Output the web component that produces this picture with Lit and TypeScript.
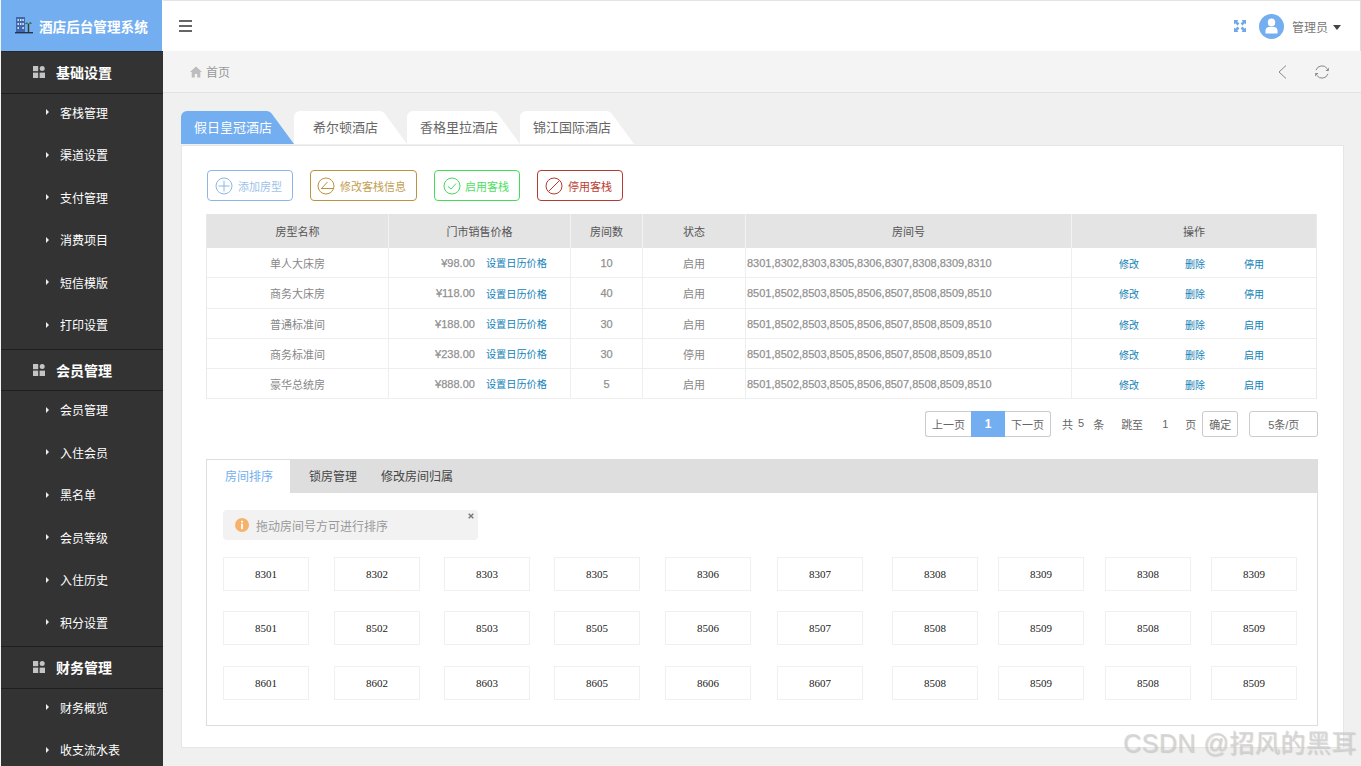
import { LitElement, html, css, svg } from "lit";
import { customElement } from "lit/decorators.js";

const NAV = [
  { title: "基础设置", items: ["客栈管理", "渠道设置", "支付管理", "消费项目", "短信模版", "打印设置"] },
  { title: "会员管理", items: ["会员管理", "入住会员", "黑名单", "会员等级", "入住历史", "积分设置"] },
  { title: "财务管理", items: ["财务概览", "收支流水表"] },
];
const N1 = "8301,8302,8303,8305,8306,8307,8308,8309,8310";
const N2 = "8501,8502,8503,8505,8506,8507,8508,8509,8510";
const ROWS = [
  { name: "单人大床房", price: "¥98.00", count: "10", status: "启用", nums: N1, act: "停用", h: "r30" },
  { name: "商务大床房", price: "¥118.00", count: "40", status: "启用", nums: N2, act: "停用", h: "r31" },
  { name: "普通标准间", price: "¥188.00", count: "30", status: "启用", nums: N2, act: "启用", h: "r30" },
  { name: "商务标准间", price: "¥238.00", count: "30", status: "停用", nums: N2, act: "启用", h: "r30" },
  { name: "豪华总统房", price: "¥888.00", count: "5", status: "启用", nums: N2, act: "启用", h: "r30" },
];
const ROOMS = [
  ["8301", "8302", "8303", "8305", "8306", "8307", "8308", "8309", "8308", "8309"],
  ["8501", "8502", "8503", "8505", "8506", "8507", "8508", "8509", "8508", "8509"],
  ["8601", "8602", "8603", "8605", "8606", "8607", "8508", "8509", "8508", "8509"],
];

const gridIcon = html`<svg class="gico" viewBox="0 0 12 12" width="12" height="12">
  <rect x="0" y="0" width="5.2" height="5.2" fill="#c4c4c4"></rect>
  <circle cx="9.2" cy="2.6" r="2.5" fill="#c4c4c4"></circle>
  <rect x="0" y="6.6" width="5.2" height="5.4" fill="#c4c4c4"></rect>
  <rect x="6.6" y="6.6" width="5.4" height="5.4" fill="#c4c4c4"></rect>
</svg>`;

@customElement("app-root")
export class AppRoot extends LitElement {
  static styles = css`
    :host {
      display: block;
      width: 1361px;
      height: 766px;
      overflow: hidden;
      position: relative;
      background: #f0f0f0;
      font-family: "Liberation Sans", "Noto Sans CJK SC", sans-serif;
      font-size: 12px;
      color: #666;
    }
    * { box-sizing: border-box; }
    .app { display: flex; height: 766px; padding-left: 1px; background: #f4f4f4; }
    .left { width: 162px; flex: none; background: #fff; display: flex; flex-direction: column; }
    .logo {
      width: 161px; height: 51px; flex: none; background: #72aef0;
      display: flex; align-items: center; padding-left: 14px; gap: 6px;
      color: #fff; font-weight: 700; font-size: 13.6px; white-space: nowrap;
    }
    .side { flex: 1; background: #333; overflow: hidden; border-top: 1px solid #25282c; }
    .sec {
      height: 41.5px; display: flex; align-items: center; padding-left: 32px;
      color: #fff; font-weight: 700; font-size: 14px; gap: 11px;
      border-bottom: 1px solid #1f1f1f;
    }
    .sec.next { border-top: 1px solid #1f1f1f; height: 42.5px; }
    .items { height: 255px; }
    .item { height: 42.5px; display: flex; align-items: center; padding: 0 0 5px 45px; color: #fff; font-size: 12px; gap: 11px; }
    .tri { width: 0; height: 0; border-left: 3px solid #eee; border-top: 3px solid transparent; border-bottom: 3px solid transparent; }
    .main { flex: 1; min-width: 0; display: flex; flex-direction: column; background: #f0f0f0; }
    .top {
      height: 51px; flex: none; background: #fff; border-top: 1px solid #e4e4e4; border-right: 1px solid #ddd;
      display: flex; align-items: center; padding: 0 19px 0 16px;
    }
    .burger { display: block; }
    .spacer { flex: 1; }
    .ava { margin-left: 13px; }
    .uname { margin-left: 8px; font-size: 12px; color: #777; }
    .caret { margin-left: 5px; border-top: 5px solid #444; border-left: 4px solid transparent; border-right: 4px solid transparent; margin-top: 2px; }
    .crumb {
      height: 42px; flex: none; background: #f4f4f4; border-bottom: 1px solid #e3e3e3;
      display: flex; align-items: center; padding: 0 31px 0 27px; color: #999;
    }
    .crumb .home { margin-right: 4px; }
    .crumb .back { margin-right: 27px; }
    .body { flex: 1; padding: 18px 17px 0 18px; min-height: 0; }
    .tabs { display: flex; height: 33px; }
    .tab {
      width: 113px; height: 33px; background: #fff; color: #666; font-size: 13px; line-height: 33px; padding-left: 13px;
      clip-path: polygon(0 0, calc(100% - 27px) 0, calc(100% - 24px) 1px, calc(100% - 22px) 3px, 100% 100%, 0 100%);
      border-top-left-radius: 6px; white-space: nowrap;
    }
    .tab.on { background: #72aef0; color: #fff; }
    .tab.wide { padding-left: 19px; }
    .tab.last { width: 114px; }
    .card {
      margin-top: 1px; height: 603px; background: #fff; border: 1px solid #e6e6e6;
      padding: 24px 25px 0 24px;
    }
    .btns { display: flex; gap: 17px; padding-left: 1px; height: 31px; }
    .btn {
      height: 31px; border: 1px solid; border-radius: 4px; display: flex; align-items: center;
      padding-left: 7px; gap: 5px; font-size: 11px; white-space: nowrap; width: 86px;
    }
    .btn.blue { border-color: #8cb7e4; color: #9dc2ea; }
    .btn.gold { border-color: #b9933f; color: #c2a052; width: 107px; padding-left: 6px; }
    .btn.green { border-color: #43dd58; color: #4fe064; padding-left: 8px; gap: 4px; }
    .btn.red { border-color: #b33a30; color: #bd3d32; padding-left: 7px; }
    .table {
      margin-top: 13px; width: 1111px; border-left: 1px solid #eaeaea; border-right: 1px solid #eaeaea;
      display: grid; grid-template-columns: 182px 182px 72px 103px 326px 1fr;
      font-size: 11px; color: #888;
    }
    .th {
      height: 34px; background: #e4e4e4; color: #555; display: flex; align-items: center; justify-content: center;
      border-right: 1px solid #f2f2f2;
    }
    .td {
      display: flex; align-items: center; justify-content: center;
      border-right: 1px solid #eee; border-bottom: 1px solid #eee;
    }
    .td.r30 { height: 30px; }
    .td.r31 { height: 31px; }
    .th:nth-child(6n), .td:nth-child(6n) { border-right: 0; }
    .td.price { justify-content: flex-end; padding-right: 23px; gap: 11px; }
    .td.nums { justify-content: flex-start; padding-left: 1px; }
    .digits { -webkit-text-stroke: 0.25px #999; color: #8c8c8c; }
    .link { color: #1282b8; font-size: 10.2px; white-space: nowrap; }
    .td.ops { justify-content: flex-start; padding: 1px 0 0 47px; }
    .td.ops .link { font-size: 10px; }
    .td.ops .link:nth-child(2) { margin-left: 46px; }
    .td.ops .link:nth-child(3) { margin-left: 39px; }
    .pager { display: flex; align-items: center; height: 26px; margin-top: 12px; width: 1112px; padding-left: 719px; font-size: 11px; color: #666; white-space: nowrap; }
    .pager > * { flex: none; }
    .pg { height: 26px; border: 1px solid #ccc; display: flex; align-items: center; justify-content: center; background: #fff; }
    .pg.prev { width: 46px; border-radius: 3px 0 0 3px; border-right: 0; }
    .pg.cur { width: 34px; background: #72aef0; border: 0; color: #fff; font-weight: 700; font-size: 12px; }
    .pg.nxt { width: 46px; border-radius: 0 3px 3px 0; border-left: 0; }
    .pg.ok { width: 36px; border-radius: 3px; margin-left: 6px; }
    .pg.size { width: 69px; border-radius: 3px; margin-left: 11px; }
    .t1 { margin-left: 11px; }
    .t5 { margin-left: 5px; margin-top: -3px; }
    .t2 { margin-left: 9px; }
    .t3 { margin-left: 17px; }
    .t6 { margin-left: 19px; }
    .t7 { margin-left: 17px; }
    .panel { margin-top: 22px; width: 1112px; height: 267px; border: 1px solid #ddd; border-top: 0; }
    .ptabs { height: 34px; background: #dedede; display: flex; font-size: 12px; color: #444; }
    .ptab { line-height: 36px; }
    .ptab.on { width: 83px; background: #fff; color: #72aef0; padding-left: 18px; margin-right: 19px; margin-top: 1px; line-height: 34px; }
    .ptab.m { margin-left: 24px; }
    .alert {
      position: relative; margin: 17px 0 0 16px; width: 255px; height: 30px; background: #f2f2f2; border-radius: 4px;
      display: flex; align-items: center; padding-left: 12px; gap: 7px; color: #999; font-size: 12px;
    }
    .alert span { padding-top: 1px; }
    .close { position: absolute; right: 4px; top: 3px; }
    .rooms {
      margin: 17px 0 0 16px; display: grid;
      grid-template-columns: 111px 110px 110px 111px 112px 115px 106px 107px 106px 86px;
      grid-template-rows: 33px 34px 33px; row-gap: 21px;
    }
    .room {
      width: 86px; height: 34px; border: 1px solid #f0f0f0; display: flex; align-items: center; justify-content: center;
      font-family: "Liberation Serif", serif; font-size: 11px; color: #222; padding-bottom: 1px;
    }
    .mark {
      position: absolute; left: 1123px; top: 725px; font-size: 25px; letter-spacing: .5px; line-height: 36px; color: rgba(210,210,210,.8);
      text-shadow: 1px 1px 1px rgba(120,120,120,.3); white-space: nowrap;
      font-family: "Liberation Sans", "Noto Sans CJK SC", sans-serif;
    }
  `;

  private ring(color: string, inner: unknown) {
    return html`<svg viewBox="0 0 18 18" width="18" height="18" fill="none" stroke=${color} stroke-width="1">
      <circle cx="9" cy="9" r="8"></circle>${inner}</svg>`;
  }

  render() {
    return html`
      <div class="app">
        <div class="left">
          <div class="logo">
            <svg viewBox="0 0 18 17" width="18" height="17">
              <rect x="1" y="0" width="9" height="15" fill="#3f68ad"></rect>
              <g fill="#dfe6f2">
                <rect x="2.5" y="2" width="1.4" height="2"></rect><rect x="5" y="2" width="1.4" height="2"></rect><rect x="7.4" y="2" width="1.4" height="2"></rect>
                <rect x="2.5" y="6" width="1.4" height="2"></rect><rect x="5" y="6" width="1.4" height="2"></rect><rect x="7.4" y="6" width="1.4" height="2"></rect>
                <rect x="2.5" y="10" width="1.4" height="2"></rect><rect x="7.4" y="10" width="1.4" height="2"></rect>
              </g>
              <path d="M13.5 15V7" stroke="#3a3a2a" stroke-width="1.4"></path>
              <path d="M13.5 7C12 4.5 10.5 5.5 10 7.5C11 6.6 12.5 6.6 13.5 7C14.5 4.6 16.2 5 17 7C15.8 6.5 14.5 6.6 13.5 7Z" fill="#2f6b3a"></path>
              <rect x="0" y="15" width="18" height="1.4" fill="#26334f"></rect>
            </svg>
            <span>酒店后台管理系统</span>
          </div>
          <div class="side">
            ${NAV.map((s, i) => html`
              <div class="sec ${i ? "next" : ""}">${gridIcon}<span>${s.title}</span></div>
              <div class="items">
                ${s.items.map((t) => html`<div class="item"><i class="tri"></i><span>${t}</span></div>`)}
              </div>`)}
          </div>
        </div>
        <div class="main">
          <div class="top">
            <svg class="burger" viewBox="0 0 13 12" width="13" height="12" fill="#666">
              <rect y="0" width="13" height="2"></rect><rect y="5" width="13" height="2"></rect><rect y="10" width="13" height="2"></rect>
            </svg>
            <div class="spacer"></div>
            <svg viewBox="0 0 12 12" width="12" height="12" fill="#6ea9e6">
              <path d="M0 0H4.5L3.2 1.3L5.4 3.5L3.5 5.4L1.3 3.2L0 4.5Z"></path>
              <path d="M12 0V4.5L10.7 3.2L8.5 5.4L6.6 3.5L8.8 1.3L7.5 0Z"></path>
              <path d="M0 12V7.5L1.3 8.8L3.5 6.6L5.4 8.5L3.2 10.7L4.5 12Z"></path>
              <path d="M12 12H7.5L8.8 10.7L6.6 8.5L8.5 6.6L10.7 8.8L12 7.5Z"></path>
            </svg>
            <svg class="ava" viewBox="0 0 25 25" width="25" height="25">
              <circle cx="12.5" cy="12.5" r="12.5" fill="#72aef0"></circle>
              <ellipse cx="12.5" cy="8.5" rx="3.7" ry="4" fill="#fff"></ellipse>
              <path d="M6.5 19.5V16.5C6.5 14 8.5 13 10 13H15C16.5 13 18.5 14 18.5 16.5V19.5Z" fill="#fff"></path>
            </svg>
            <span class="uname">管理员</span>
            <i class="caret"></i>
          </div>
          <div class="crumb">
            <svg class="home" viewBox="0 0 12 12" width="12" height="12" fill="#bdbdbd">
              <path d="M6 .5L12 6H10.3V11.5H7.2V8H4.8V11.5H1.7V6H0Z"></path>
            </svg>
            <span>首页</span>
            <div class="spacer"></div>
            <svg class="back" viewBox="0 0 9 14" width="9" height="14" fill="none" stroke="#888" stroke-width="1">
              <path d="M8 .5L1 7L8 13.5"></path>
            </svg>
            <svg viewBox="0 0 16 16" width="16" height="16" fill="none" stroke="#888" stroke-width="1">
              <path d="M2 6.2A6.3 6.3 0 0 1 13.2 4.6"></path>
              <path d="M14 9.8A6.3 6.3 0 0 1 2.8 11.4"></path>
              <path d="M14.8 3.4V7H11.6Z" fill="#888" stroke="none"></path>
              <path d="M1.2 12.6V9H4.4Z" fill="#888" stroke="none"></path>
            </svg>
          </div>
          <div class="body">
            <div class="tabs">
              <div class="tab on">假日皇冠酒店</div>
              <div class="tab wide">希尔顿酒店</div>
              <div class="tab">香格里拉酒店</div>
              <div class="tab last">锦江国际酒店</div>
            </div>
            <div class="card">
              <div class="btns">
                <div class="btn blue">${this.ring("#8cb7e4", svg`<path d="M3.5 9H14.5M9 3.5V14.5"></path>`)}<span>添加房型</span></div>
                <div class="btn gold">${this.ring("#b9933f", svg`<path d="M4 11.5H16M4.5 11.5L10.5 5"></path>`)}<span>修改客栈信息</span></div>
                <div class="btn green">${this.ring("#43dd58", svg`<path d="M5 9.5L8 12L13 6.5"></path>`)}<span>启用客栈</span></div>
                <div class="btn red">${this.ring("#b33a30", svg`<path d="M3.5 14.5L14.5 3.5"></path>`)}<span>停用客栈</span></div>
              </div>
              <div class="table">
                <div class="th">房型名称</div><div class="th">门市销售价格</div><div class="th">房间数</div>
                <div class="th">状态</div><div class="th">房间号</div><div class="th">操作</div>
                ${ROWS.map((r) => html`
                  <div class="td ${r.h}">${r.name}</div>
                  <div class="td price ${r.h}"><span class="digits">${r.price}</span><span class="link">设置日历价格</span></div>
                  <div class="td ${r.h}"><span class="digits">${r.count}</span></div>
                  <div class="td ${r.h}">${r.status}</div>
                  <div class="td nums ${r.h}"><span class="digits">${r.nums}</span></div>
                  <div class="td ops ${r.h}"><span class="link">修改</span><span class="link">删除</span><span class="link">${r.act}</span></div>`)}
              </div>
              <div class="pager">
                <div class="pg prev">上一页</div><div class="pg cur">1</div><div class="pg nxt">下一页</div>
                <span class="t1">共</span><span class="t5">5</span><span class="t2">条</span>
                <span class="t3">跳至</span><span class="t6">1</span><span class="t7">页</span>
                <div class="pg ok">确定</div><div class="pg size">5条/页</div>
              </div>
              <div class="panel">
                <div class="ptabs">
                  <div class="ptab on">房间排序</div><div class="ptab">锁房管理</div><div class="ptab m">修改房间归属</div>
                </div>
                <div class="alert">
                  <svg viewBox="0 0 14 14" width="14" height="14">
                    <circle cx="7" cy="7" r="7" fill="#f6b26b"></circle>
                    <rect x="6.1" y="5.6" width="1.8" height="5.6" fill="#fff"></rect>
                    <rect x="6.1" y="2.8" width="1.8" height="1.8" fill="#fff"></rect>
                  </svg>
                  <span>拖动房间号方可进行排序</span>
                  <svg class="close" viewBox="0 0 6 6" width="6" height="6" stroke="#777" stroke-width="1.4"><path d="M.7 .7L5.3 5.3M5.3 .7L.7 5.3"></path></svg>
                </div>
                <div class="rooms">
                  ${ROOMS.flat().map((n) => html`<div class="room">${n}</div>`)}
                </div>
              </div>
            </div>
          </div>
        </div>
      </div>
      <div class="mark">CSDN @招风的黑耳</div>
    `;
  }
}
